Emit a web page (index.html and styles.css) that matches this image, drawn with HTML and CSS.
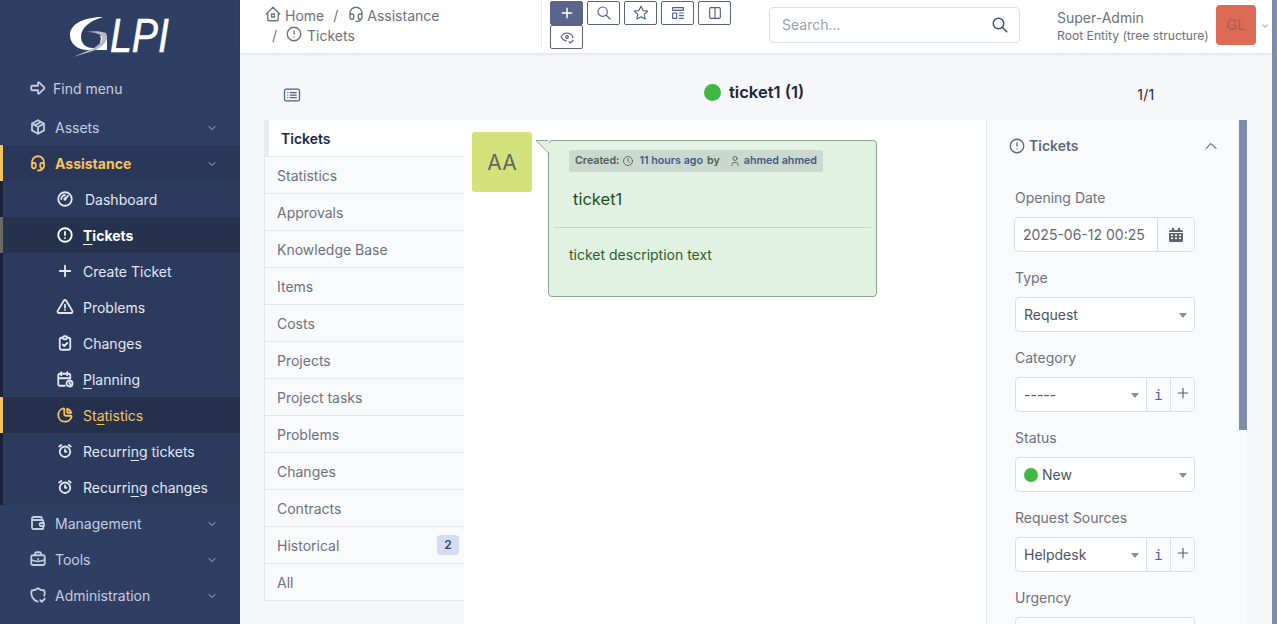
FILE: index.html
```html
<!DOCTYPE html>
<html lang="en">
<head>
<meta charset="utf-8">
<title>ticket1 - GLPI</title>
<link rel="stylesheet" href="styles.css">
</head>
<body>
<svg class="defs" width="0" height="0">
  <symbol id="i-home" viewBox="0 0 24 24"><path d="M5 12H3l9-9 9 9h-2M5 12v7a2 2 0 0 0 2 2h10a2 2 0 0 0 2-2v-7M10 12h4v4h-4z"/></symbol>
  <symbol id="i-headset" viewBox="0 0 24 24"><path d="M4 14v-3a8 8 0 1 1 16 0v3M18 19c0 1.657-2.686 3-6 3M4 14a2 2 0 0 1 2-2h1a2 2 0 0 1 2 2v3a2 2 0 0 1-2 2H6a2 2 0 0 1-2-2v-3zM15 14a2 2 0 0 1 2-2h1a2 2 0 0 1 2 2v3a2 2 0 0 1-2 2h-1a2 2 0 0 1-2-2v-3z"/></symbol>
  <symbol id="i-alert" viewBox="0 0 24 24"><circle cx="12" cy="12" r="9"/><path d="M12 8v4M12 16h.01"/></symbol>
  <symbol id="i-arrow" viewBox="0 0 24 24"><path d="M4 9h8V5.414a1 1 0 0 1 1.707-.707l6.586 6.586a1 1 0 0 1 0 1.414l-6.586 6.586A1 1 0 0 1 12 18.586V15H4a1 1 0 0 1-1-1v-4a1 1 0 0 1 1-1z"/></symbol>
  <symbol id="i-package" viewBox="0 0 24 24"><path d="M12 3l8 4.5v9L12 21l-8-4.5v-9L12 3M12 12l8-4.5M12 12v9M12 12L4 7.5M16 5.25l-8 4.5"/></symbol>
  <symbol id="i-gauge" viewBox="0 0 24 24"><circle cx="12" cy="12" r="9"/><circle cx="12" cy="12" r="1"/><path d="M13.41 10.59L16 8M7 12a5 5 0 0 1 5-5"/></symbol>
  <symbol id="i-plus" viewBox="0 0 24 24"><path d="M12 5v14M5 12h14"/></symbol>
  <symbol id="i-triangle" viewBox="0 0 24 24"><path d="M12 9v4M10.363 3.591L2.257 17.125a1.914 1.914 0 0 0 1.636 2.871h16.214a1.914 1.914 0 0 0 1.636-2.87L13.637 3.59a1.914 1.914 0 0 0-3.274 0zM12 16h.01"/></symbol>
  <symbol id="i-clipboard" viewBox="0 0 24 24"><path d="M9 5H7a2 2 0 0 0-2 2v12a2 2 0 0 0 2 2h10a2 2 0 0 0 2-2V7a2 2 0 0 0-2-2h-2M9 5a2 2 0 0 1 2-2h2a2 2 0 0 1 2 2 2 2 0 0 1-2 2h-2a2 2 0 0 1-2-2zM9 14l2 2 4-4"/></symbol>
  <symbol id="i-calendar" viewBox="0 0 24 24"><path d="M11.795 21H5a2 2 0 0 1-2-2V7a2 2 0 0 1 2-2h12a2 2 0 0 1 2 2v4M15 3v4M7 3v4M3 11h16M18 16.496V18l1 1"/><circle cx="18" cy="18" r="4"/></symbol>
  <symbol id="i-pie" viewBox="0 0 24 24"><path d="M10 3.2A9 9 0 1 0 20.8 14a1 1 0 0 0-1-1H13a2 2 0 0 1-2-2V4a.9.9 0 0 0-1-.8M15 3.5A9 9 0 0 1 20.5 9H16a1 1 0 0 1-1-1V3.5"/></symbol>
  <symbol id="i-alarm" viewBox="0 0 24 24"><circle cx="12" cy="13" r="7"/><path d="M12 10v3h2M7 4L4.25 6M17 4l2.75 2"/></symbol>
  <symbol id="i-wallet" viewBox="0 0 24 24"><path d="M17 8V5a1 1 0 0 0-1-1H6a2 2 0 0 0 0 4h12a1 1 0 0 1 1 1v3m0 4v3a1 1 0 0 1-1 1H6a2 2 0 0 1-2-2V6M20 12v4h-4a2 2 0 0 1 0-4h4"/></symbol>
  <symbol id="i-briefcase" viewBox="0 0 24 24"><path d="M3 9a2 2 0 0 1 2-2h14a2 2 0 0 1 2 2v9a2 2 0 0 1-2 2H5a2 2 0 0 1-2-2V9zM8 7V5a2 2 0 0 1 2-2h4a2 2 0 0 1 2 2v2M12 12v.01M3 13a20 20 0 0 0 18 0"/></symbol>
  <symbol id="i-shield" viewBox="0 0 24 24"><path d="M11.46 20.846A12 12 0 0 1 3.5 6 12 12 0 0 0 12 3a12 12 0 0 0 8.5 3 12 12 0 0 1-.09 7.06M15 19l2 2 4-4"/></symbol>
  <symbol id="i-search" viewBox="0 0 24 24"><circle cx="10" cy="10" r="7"/><path d="M21 21l-6-6"/></symbol>
  <symbol id="i-star" viewBox="0 0 24 24"><path d="M12 17.75l-6.172 3.245 1.179-6.873-5-4.867 6.9-1 3.086-6.253 3.086 6.253 6.9 1-5 4.867 1.179 6.873z"/></symbol>
  <symbol id="i-layout" viewBox="0 0 24 24"><path d="M4 4h16v4H4zM4 12h6v8H4zM14 12h6M14 16h6M14 20h6"/></symbol>
  <symbol id="i-columns" viewBox="0 0 24 24"><rect x="4" y="4" width="16" height="16" rx="2"/><path d="M12 4v16"/></symbol>
  <symbol id="i-eye" viewBox="0 0 24 24"><circle cx="12" cy="12" r="2"/><path d="M11.102 17.957c-3.204-.307-5.904-2.294-8.102-5.957 2.4-4 5.4-6 9-6 3.6 0 6.6 2 9 6a19.5 19.5 0 0 1-.663 1.032M15 19l2 2 4-4"/></symbol>
  <symbol id="i-list" viewBox="0 0 24 24"><rect x="3" y="5" width="18" height="14" rx="2"/><path d="M7 9h.01M7 12h.01M7 15h.01M10 9h7M10 12h7M10 15h7"/></symbol>
  <symbol id="i-clock" viewBox="0 0 24 24"><circle cx="12" cy="12" r="9"/><path d="M12 7v5l3 3"/></symbol>
  <symbol id="i-user" viewBox="0 0 24 24"><circle cx="12" cy="7" r="4"/><path d="M6 21v-2a4 4 0 0 1 4-4h4a4 4 0 0 1 4 4v2"/></symbol>
  <symbol id="i-down" viewBox="0 0 24 24"><path d="M6 9l6 6 6-6"/></symbol>
  <symbol id="i-up" viewBox="0 0 24 24"><path d="M6 15l6-6 6 6"/></symbol>
</svg>

<aside class="sidebar">
  <div class="brand">
    <svg class="logo" width="112" height="44" viewBox="0 0 112 44">
      <path class="logo-g" d="M34 1C17 1 1 7 1 19c0 9 8 15 18 15h19V20c-2-1-5-1-7 0l1 2-2 10H24c-8 0-12-5-12-11C12 12 20 5 34 1z"/>
      <path class="logo-swoosh" d="M37 17c-6-2-13-2-19-1 5 0 13 1 15 5 1 4-3 8-8 11L4 41l20-6c9-3 15-10 14-15z"/>
      <text class="logo-text" x="41" y="36" textLength="59" lengthAdjust="spacingAndGlyphs">LPI</text>
    </svg>
  </div>
  <nav class="menu">
    <a class="top find"><svg class="ic"><use href="#i-arrow"/></svg><span>Find menu</span></a>
    <a class="top"><svg class="ic"><use href="#i-package"/></svg><span>Assets</span><svg class="chev"><use href="#i-down"/></svg></a>
    <a class="top open"><svg class="ic"><use href="#i-headset"/></svg><span>Assistance</span><svg class="chev"><use href="#i-down"/></svg></a>
    <div class="sub">
      <a class="item dash"><svg class="ic"><use href="#i-gauge"/></svg><span>Dashboard</span></a>
      <a class="item current"><svg class="ic"><use href="#i-alert"/></svg><span><u>T</u>ickets</span></a>
      <a class="item"><svg class="ic"><use href="#i-plus"/></svg><span>Create Ticket</span></a>
      <a class="item"><svg class="ic"><use href="#i-triangle"/></svg><span>Problems</span></a>
      <a class="item"><svg class="ic"><use href="#i-clipboard"/></svg><span>Changes</span></a>
      <a class="item"><svg class="ic"><use href="#i-calendar"/></svg><span><u>P</u>lanning</span></a>
      <a class="item active"><svg class="ic"><use href="#i-pie"/></svg><span>St<u>a</u>tistics</span></a>
      <a class="item"><svg class="ic"><use href="#i-alarm"/></svg><span>Recurri<u>n</u>g tickets</span></a>
      <a class="item"><svg class="ic"><use href="#i-alarm"/></svg><span>Recurri<u>n</u>g changes</span></a>
    </div>
    <a class="top"><svg class="ic"><use href="#i-wallet"/></svg><span>Management</span><svg class="chev"><use href="#i-down"/></svg></a>
    <a class="top"><svg class="ic"><use href="#i-briefcase"/></svg><span>Tools</span><svg class="chev"><use href="#i-down"/></svg></a>
    <a class="top"><svg class="ic"><use href="#i-shield"/></svg><span>Administration</span><svg class="chev"><use href="#i-down"/></svg></a>
  </nav>
</aside>

<div class="page">
  <header class="topbar">
    <div class="crumbs">
      <span class="crumb first"><svg class="ic"><use href="#i-home"/></svg>Home</span>
      <span class="slash">/</span>
      <span class="crumb mid"><svg class="ic"><use href="#i-headset"/></svg>Assistance</span>
      <span class="crumb second"><span class="slash">/</span><svg class="ic"><use href="#i-alert"/></svg>Tickets</span>
    </div>
    <div class="tools">
      <button class="tool primary"><svg class="ic"><use href="#i-plus"/></svg></button>
      <button class="tool"><svg class="ic"><use href="#i-search"/></svg></button>
      <button class="tool"><svg class="ic"><use href="#i-star"/></svg></button>
      <button class="tool"><svg class="ic"><use href="#i-layout"/></svg></button>
      <button class="tool"><svg class="ic"><use href="#i-columns"/></svg></button>
      <button class="tool"><svg class="ic"><use href="#i-eye"/></svg></button>
    </div>
    <div class="search"><span>Search...</span><svg class="ic"><use href="#i-search"/></svg></div>
    <div class="account">
      <div class="who"><div class="name">Super-Admin</div><div class="entity">Root Entity (tree structure)</div></div>
      <div class="avatar">GL</div>
      <svg class="chev"><use href="#i-down"/></svg>
    </div>
  </header>

  <main class="content">
    <div class="titlebar">
      <svg class="ic list"><use href="#i-list"/></svg>
      <div class="title"><i class="dot"></i>ticket1 (1)</div>
      <div class="pager">1/1</div>
    </div>
    <div class="card">
      <ul class="tabs">
        <li class="tab selected">Tickets</li>
        <li class="tab">Statistics</li>
        <li class="tab">Approvals</li>
        <li class="tab">Knowledge Base</li>
        <li class="tab">Items</li>
        <li class="tab">Costs</li>
        <li class="tab">Projects</li>
        <li class="tab">Project tasks</li>
        <li class="tab">Problems</li>
        <li class="tab">Changes</li>
        <li class="tab">Contracts</li>
        <li class="tab">Historical<b class="count">2</b></li>
        <li class="tab">All</li>
      </ul>
      <section class="timeline">
        <div class="aa">AA</div>
        <article class="bubble">
          <svg class="tail" width="14" height="14" viewBox="0 0 14 14"><path class="tail-fill" d="M0 1h13v12z"/><path class="tail-line" d="M0 .5h12M.2.7L13 13.5"/></svg>
          <div class="meta">Created:<svg class="ic"><use href="#i-clock"/></svg><span class="link when">11 hours ago</span>by<svg class="ic usr"><use href="#i-user"/></svg><span class="link">ahmed ahmed</span></div>
          <h2 class="subject">ticket1</h2>
          <hr class="rule">
          <p class="desc">ticket description text</p>
        </article>
      </section>
      <aside class="panel">
        <div class="scroll-thumb"></div>
        <div class="panel-head"><svg class="ic"><use href="#i-alert"/></svg><span>Tickets</span><svg class="collapse"><use href="#i-up"/></svg></div>
        <div class="field">
          <label>Opening Date</label>
          <div class="control date"><span class="val">2025-06-12 00:25</span><span class="addon cal"><svg width="14" height="14" viewBox="0 0 14 14"><path class="cal-shape" d="M3 0h2v2h4V0h2v2h1.5A1.5 1.5 0 0 1 14 3.500V4H0v-.5A1.500 1.500 0 0 1 1.500 2H3zM0 5h14v7.500a1.500 1.500 0 0 1-1.500 1.500h-11A1.500 1.500 0 0 1 0 12.500zm2 1.500V8h2V6.500zm4 0V8h2V6.500zm4 0V8h2V6.500zm-8 3V11h2V9.500zm4 0V11h2V9.500zm4 0V11h2V9.500z"/></svg></span></div>
        </div>
        <div class="field">
          <label>Type</label>
          <div class="control"><span class="val">Request</span><i class="caret"></i></div>
        </div>
        <div class="field">
          <label>Category</label>
          <div class="control"><span class="val">-----</span><i class="caret"></i><span class="addon info">i</span><span class="addon add"><svg class="ic"><use href="#i-plus"/></svg></span></div>
        </div>
        <div class="field">
          <label>Status</label>
          <div class="control"><span class="val"><i class="dot small"></i>New</span><i class="caret"></i></div>
        </div>
        <div class="field">
          <label>Request Sources</label>
          <div class="control"><span class="val">Helpdesk</span><i class="caret"></i><span class="addon info">i</span><span class="addon add"><svg class="ic"><use href="#i-plus"/></svg></span></div>
        </div>
        <div class="field">
          <label>Urgency</label>
          <div class="control"></div>
        </div>
      </aside>
    </div>
  </main>
</div>
<div class="page-scroll"></div>
</body>
</html>
```
FILE: styles.css
```css
* { box-sizing: border-box; }
html, body { height: 100%; }
body {
  margin: 0;
  display: flex;
  height: 624px;
  overflow: hidden;
  font: 14px/20px Inter, "Noto Sans", sans-serif;
  color: #626976;
  background: #f5f7fb;
}
.defs { position: absolute; }
svg.ic, svg.chev, svg.collapse {
  fill: none;
  stroke: currentColor;
  stroke-width: 2;
  stroke-linecap: round;
  stroke-linejoin: round;
  flex: none;
}
svg.ic { width: 18px; height: 18px; }

/* Sidebar */
.sidebar { width: 240px; flex: none; background: #2f3f64; overflow: hidden; }
.brand { height: 70px; padding: 16px 0 0 69px; }
.logo { display: block; overflow: visible; }
.logo-g { fill: #fff; }
.logo-swoosh { fill: #b3bac9; }
.logo-text { fill: #fff; stroke: #fff; stroke-width: .6px; font: italic 48px "Liberation Sans", sans-serif; }
.menu { display: flex; flex-direction: column; }
.top, .item { display: flex; align-items: center; height: 36px; padding-top: 2px; }
.top svg.ic, .item svg.ic { stroke-width: 2.4; margin-top: -2px; }
.top { padding-right: 22px; padding-left: 26px; color: #c3cde0; border-left: 3px solid transparent; }
.top span { margin-left: 8px; flex: 1; }
.top .chev { width: 12px; height: 12px; color: #aab5cc; }
.top.find { margin-bottom: 3px; }
.top.find span { margin-left: 6px; }
.top.open { background: #2a3759; border-left-color: #f6c25f; color: #f6c25f; font-weight: 700; }
.top.open .chev { color: #aab5cc; }
.sub { background: #2c3a5e; border-left: 3px solid #1a2038; }
.item { padding-left: 53px; color: #e3e8f1; }
.item span { margin-left: 9px; }
.item.dash span { margin-left: 11px; }
.item u { text-underline-offset: 3px; }
.item.current { background: #27324f; color: #fff; font-weight: 700; box-shadow: -3px 0 0 #6c6a66; }
.item.active { background: #25304d; color: #f6c25f; box-shadow: -3px 0 0 #f6c25f; }

/* Page */
.page { flex: 1; min-width: 0; display: flex; flex-direction: column; }
.page-scroll { width: 5px; flex: none; background: #7f8bab; }
.topbar {
  height: 53px;
  flex: none;
  display: flex;
  background: #fff;
  box-shadow: 0 1px 3px rgba(30, 40, 70, .12);
  position: relative;
}
.crumbs {
  width: 302px;
  height: 49px;
  padding: 6px 0 0 24px;
  display: flex;
  flex-wrap: wrap;
  align-items: flex-start;
  align-content: flex-start;
  column-gap: 9px;
  border-right: 1px solid #e6e8ee;
  color: #6c7280;
}
.crumb { display: flex; align-items: center; gap: 3px; height: 20px; }
.crumb.mid { gap: 2px; }
.crumb svg.ic { stroke-width: 1.8; margin-top: -4px; }
.crumb.second { flex-basis: 100%; padding-left: 8px; gap: 8px; }
.crumb.second svg.ic { margin-right: -4px; }
.slash { color: #6c7280; }
.tools { width: 194px; margin-left: 8px; padding-top: 1px; display: flex; flex-wrap: wrap; column-gap: 4px; align-content: flex-start; }
.tool {
  width: 33px;
  height: 24px;
  padding: 0;
  display: flex;
  align-items: center;
  justify-content: center;
  background: #fff;
  border: 1px solid #5a6478;
  border-radius: 2px;
  color: #4f5f85;
}
.tool svg.ic { width: 16px; height: 16px; stroke-width: 1.7; }
.tool.primary { background: #59658a; border-color: #59658a; color: #fff; }
.tool.primary svg.ic { stroke-width: 2.2; }
.search {
  width: 251px;
  height: 36px;
  margin: 7px 0 0 25px;
  padding: 0 10px 0 12px;
  display: flex;
  align-items: center;
  justify-content: space-between;
  background: #fff;
  border: 1px solid #dadfe7;
  border-radius: 4px;
  color: #9aa1ad;
}
.search svg.ic { color: #3f5282; }
.account { display: flex; margin-left: 37px; align-items: flex-start; color: #6c7280; }
.who { padding-top: 8px; width: 159px; }
.name { line-height: 20px; }
.entity { font-size: 12.150px; line-height: 15px; white-space: nowrap; }
.avatar {
  width: 40px;
  height: 40px;
  margin-top: 5px;
  border-radius: 4px;
  background: #dd6a55;
  color: #a65f5c;
  font-size: 15px;
  display: flex;
  align-items: center;
  justify-content: center;
}
.account .chev { width: 10px; height: 10px; margin: 21px 0 0 4px; color: #6c7280; }

/* Content */
.content { flex: 1; min-height: 0; padding: 0 25px 0 24px; display: flex; flex-direction: column; }
.titlebar { height: 67px; flex: none; position: relative; display: flex; align-items: flex-start; }
.titlebar .list { width: 20px; height: 20px; margin: 32px 0 0 18px; stroke-width: 1.5; color: #4f5f85; }
.title {
  margin: 27px 0 0 402px;
  display: flex;
  align-items: center;
  gap: 8px;
  font-size: 16.600px;
  line-height: 24px;
  font-weight: 600;
  color: #1d273b;
}
.dot { display: block; width: 17px; height: 17px; border-radius: 50%; background: #3fb846; }
.pager { margin: 32px 0 0 333px; color: #1d273b; letter-spacing: .3px; }
.card { flex: 1; min-height: 0; display: flex; align-items: stretch; }
.tabs { width: 200px; flex: none; margin: 0; padding: 0; list-style: none; align-self: flex-start; background: #f9fafc; border-left: 1px solid #e3e6eb; border-bottom: 1px solid #e3e6eb; }
.tab { height: 37px; padding: 2px 5px 0 12px; display: flex; align-items: center; justify-content: space-between; border-bottom: 1px solid #e3e6eb; color: #6c7280; }
.tab:last-child { border-bottom: 0; height: 36px; }
.tab.selected { margin-left: -1px; background: #fff; border-left: 5px solid #e9ebef; font-weight: 600; color: #1d273b; }
.count { width: 22px; height: 20px; margin-top: -2px; border-radius: 4px; background: #d3dcf0; color: #3a4660; font-size: 12px; font-weight: 600; display: flex; align-items: center; justify-content: center; }
.timeline { width: 522px; flex: none; background: #fff; padding: 12px 0 0 8px; display: flex; align-items: flex-start; gap: 16px; }
.aa { width: 60px; height: 60px; flex: none; padding-top: 2px; border-radius: 3px; background: #d3e27a; color: #5e6a62; font-size: 21px; display: flex; align-items: center; justify-content: center; }
.bubble {
  position: relative;
  width: 329px;
  height: 157px;
  margin-top: 8px;
  padding: 8px 5px 0 5px;
  background: #e1f1e2;
  border: 1px solid #8ba68d;
  border-radius: 4px;
}
.tail { position: absolute; left: -13px; top: -1px; }
.tail-fill { fill: #e1f1e2; }
.tail-line { fill: none; stroke: #8ba68d; }
.meta {
  display: inline-flex;
  align-items: center;
  height: 22px;
  margin-left: 15px;
  padding: 0 6px;
  border-radius: 3px;
  background: #cbd8cd;
  color: #525e57;
  font-size: 10.700px;
  font-weight: 600;
  white-space: nowrap;
}
.meta svg.ic { width: 12px; height: 12px; stroke-width: 1.7; margin: 0 6px 0 2px; }
.meta svg.usr { margin: 0 3px 0 9px; }
.link { color: #445a8c; }
.when { margin-right: 4px; }
.subject { margin: 17px 0 0 19px; font-size: 16.500px; line-height: 20px; font-weight: 400; color: #1f4f21; }
.rule { margin: 18px 0 0 0; border: 0; border-top: 1px solid #c4d6c6; }
.desc { margin: 17px 0 0 15px; color: #2a5f2c; }

/* Panel */
.panel { position: relative; flex: 1; min-width: 0; overflow: hidden; background: #f9fafc; border-left: 1px solid #e6e8ee; padding: 0 0 0 28px; }
.scroll-thumb { position: absolute; right: 0; top: 0; width: 8px; height: 310px; background: #7f8bab; }
.panel-head { height: 52px; margin-left: -7px; display: flex; align-items: center; gap: 3px; font-weight: 600; color: #626976; }
.panel-head svg.ic { stroke-width: 1.8; }
svg.collapse { width: 20px; height: 20px; margin-left: 119px; color: #1d273b; stroke-width: 1.2; }
.field { height: 80px; padding-top: 16px; }
.field label { display: block; line-height: 20px; margin-bottom: 9px; color: #6c7280; }
.control {
  width: 180px;
  height: 35px;
  display: flex;
  align-items: center;
  background: #fff;
  border: 1px solid #dadfe7;
  border-radius: 4px;
  color: #4d5460;
}
.control.date { width: 181px; margin-left: -1px; }
.val { flex: 1; min-width: 0; padding-left: 8px; display: flex; align-items: center; gap: 4px; white-space: nowrap; }
.date .val { color: #626976; }
.caret { width: 0; height: 0; margin-right: 7px; margin-top: 2px; border: 4px solid transparent; border-top: 5px solid #8b8f96; border-bottom: 0; }
.addon { height: 100%; display: flex; align-items: center; justify-content: center; border-left: 1px solid #dadfe7; background: #f9fafc; color: #4f5f85; }
.cal { width: 37px; border-radius: 0 4px 4px 0; }
.cal-shape { fill: #5d6470; fill-rule: evenodd; }
.info { width: 24px; font: 400 14px "DejaVu Sans Mono", monospace; }
.add { width: 24px; border-radius: 0 4px 4px 0; padding-bottom: 4px; }
.add svg.ic { width: 16px; height: 16px; stroke-width: 1.7; }
.dot.small { width: 14px; height: 14px; }
```
